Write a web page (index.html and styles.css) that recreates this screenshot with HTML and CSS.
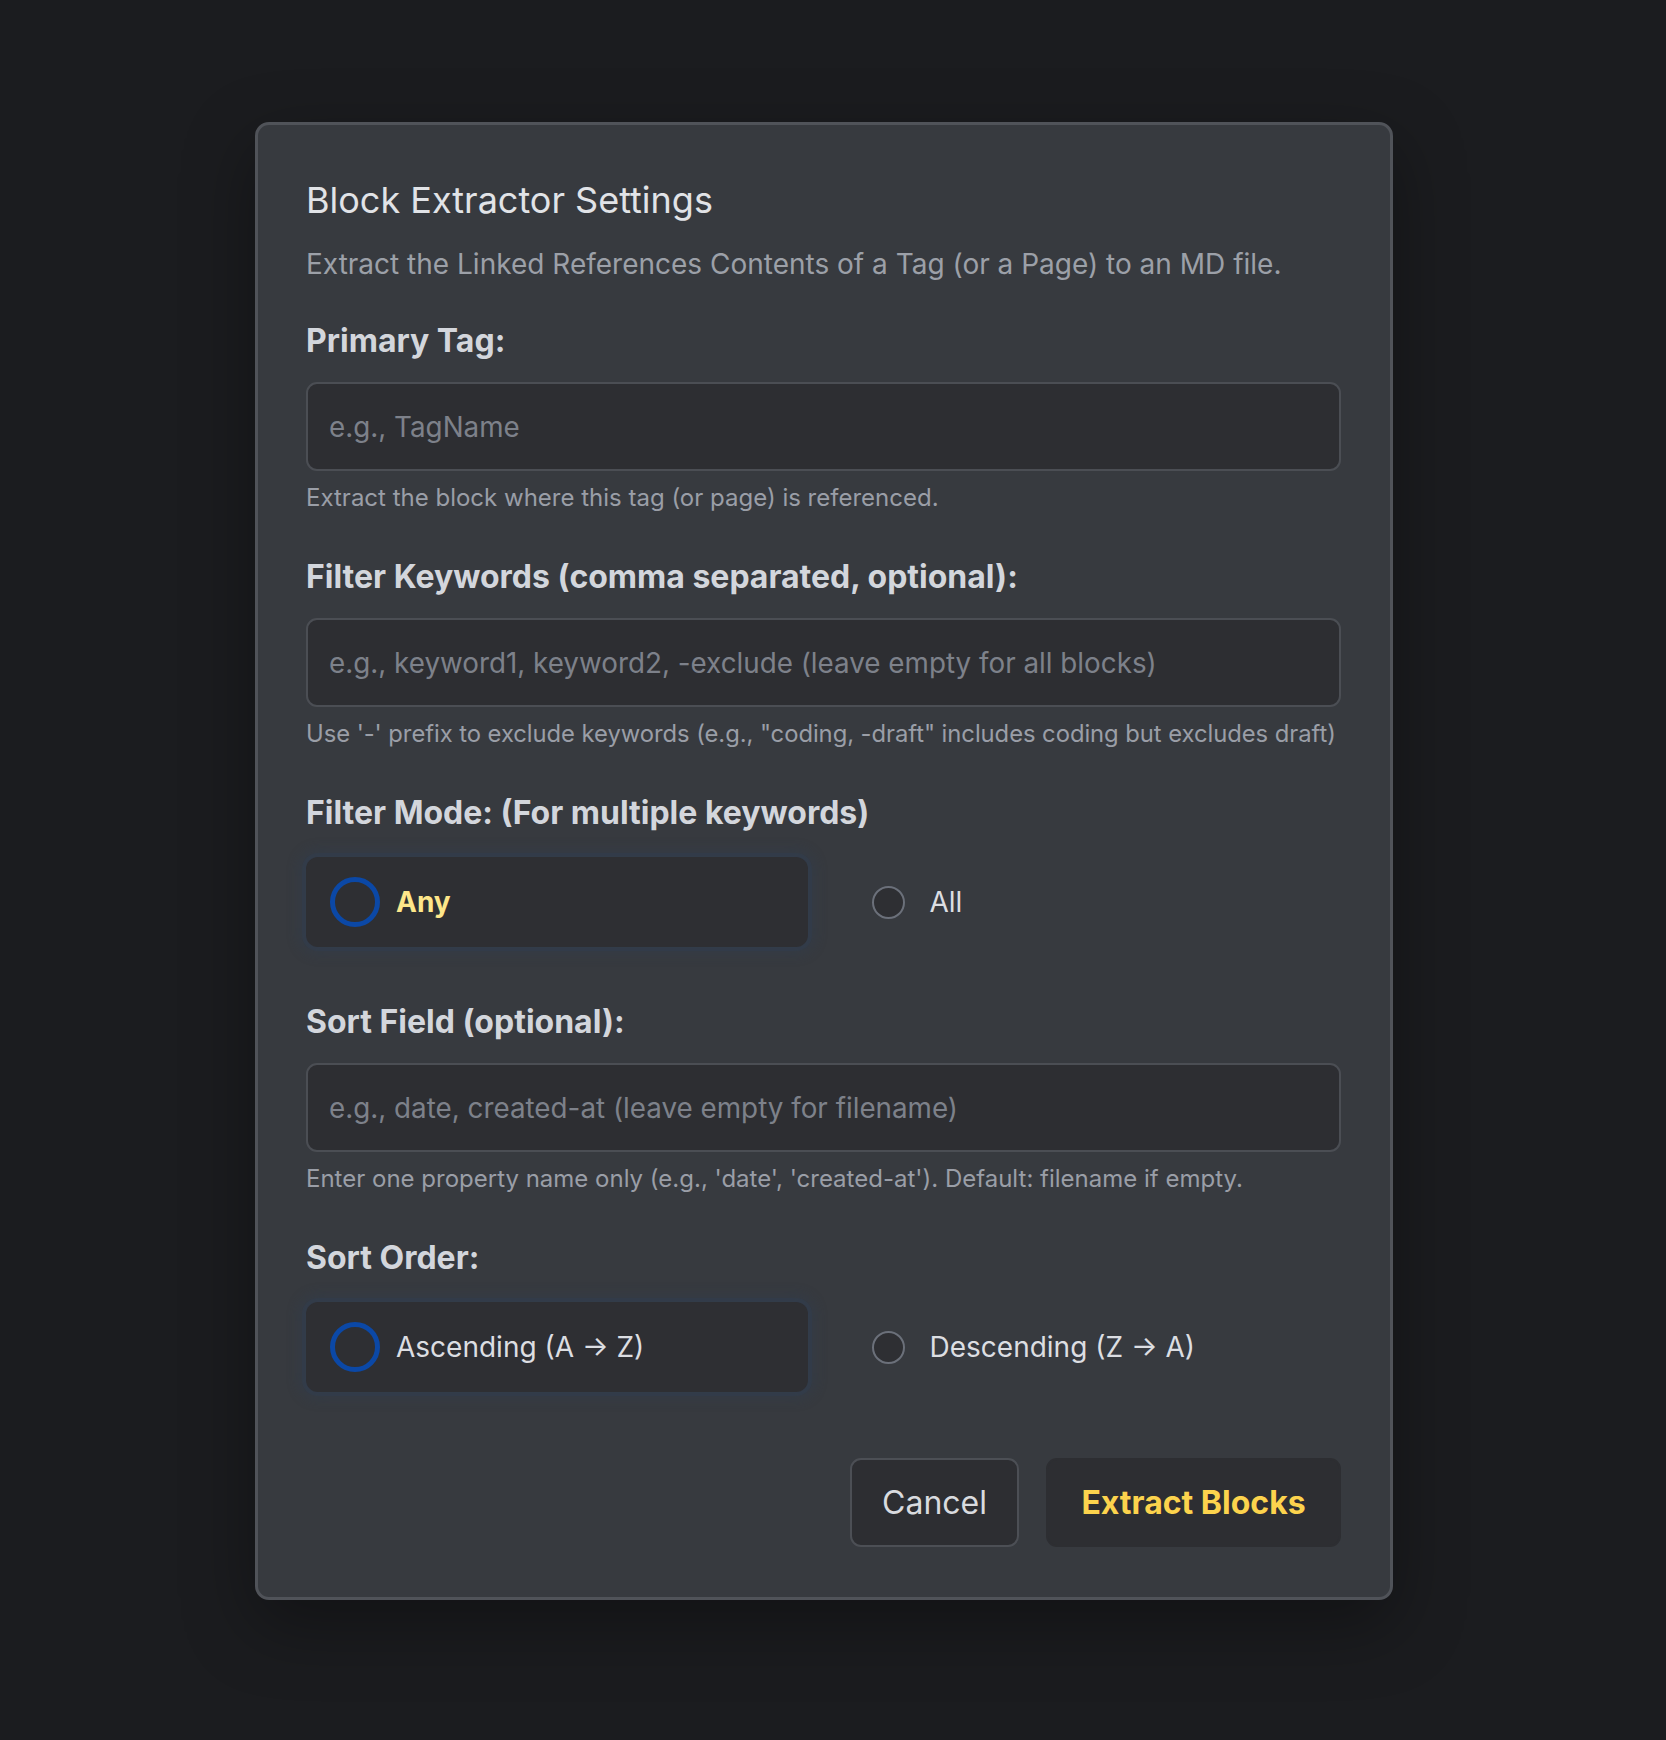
FILE: index.html
```html
<!DOCTYPE html>
<html lang="en">
<head>
<meta charset="utf-8">
<title>Block Extractor Settings</title>
<link rel="stylesheet" href="styles.css">
</head>
<body>
<div class="dialog">
  <h1 class="title">Block Extractor Settings</h1>
  <p class="desc">Extract the Linked References Contents of a Tag (or a Page) to an MD file.</p>

  <div class="field first">
    <label class="label">Primary Tag:</label>
    <div class="input"><span class="ph">e.g., TagName</span></div>
    <p class="help">Extract the block where this tag (or page) is referenced.</p>
  </div>

  <div class="field">
    <label class="label">Filter Keywords (comma separated, optional):</label>
    <div class="input"><span class="ph">e.g., keyword1, keyword2, -exclude (leave empty for all blocks)</span></div>
    <p class="help tight">Use '-' prefix to exclude keywords (e.g., "coding, -draft" includes coding but excludes draft)</p>
  </div>

  <div class="field choice">
    <label class="label">Filter Mode: (For multiple keywords)</label>
    <div class="options">
      <div class="option selected"><span class="radio"><span class="ring"></span></span><span class="opt-text bold">Any</span></div>
      <div class="option"><span class="radio"><span class="dot"></span></span><span class="opt-text">All</span></div>
    </div>
  </div>

  <div class="field">
    <label class="label">Sort Field (optional):</label>
    <div class="input"><span class="ph">e.g., date, created-at (leave empty for filename)</span></div>
    <p class="help">Enter one property name only (e.g., 'date', 'created-at'). Default: filename if empty.</p>
  </div>

  <div class="field choice">
    <label class="label">Sort Order:</label>
    <div class="options">
      <div class="option selected"><span class="radio"><span class="ring"></span></span><span class="opt-text">Ascending (A → Z)</span></div>
      <div class="option"><span class="radio"><span class="dot"></span></span><span class="opt-text">Descending (Z → A)</span></div>
    </div>
  </div>

  <div class="actions">
    <button class="btn cancel">Cancel</button>
    <button class="btn primary">Extract Blocks</button>
  </div>
</div>
</body>
</html>
```

FILE: styles.css
```css
* { box-sizing: border-box; }
html, body { margin: 0; padding: 0; }
body {
  background: #1b1c1f;
  font-family: Inter, "Noto Sans", sans-serif;
  min-height: 1740px;
}
.dialog {
  width: 1138px;
  margin: 122px 0 0 255px;
  background: #373a3f;
  border: 3px solid #505359;
  border-radius: 14px;
  padding: 53px 49px 50px 48px;
  box-shadow: 0 24px 70px rgba(0,0,0,0.35);
}
.title {
  margin: 0;
  font-size: 36px;
  font-weight: 400;
  color: #e1e3e7;
  line-height: 44px;
}
.desc {
  margin: 24px 0 0;
  font-size: 28px;
  color: #9ca0a8;
  line-height: 36px;
}
.field { margin-top: 44px; }
.field.first { margin-top: 39px; }
.field.choice + .field { margin-top: 55px; }
.label {
  display: block;
  font-size: 32px;
  font-weight: 700;
  color: #d3d6dc;
  line-height: 40px;
}
.input {
  margin-top: 21px;
  height: 89px;
  background: #2d2e32;
  border: 2px solid #4b4e54;
  border-radius: 11px;
  display: flex;
  align-items: center;
  padding: 0 21px;
}
.ph { font-size: 27.8px; color: #7d818a; }
.help {
  margin: 12px 0 0;
  font-size: 24px;
  color: #9a9ea7;
  line-height: 30px;
  white-space: nowrap;
}
.help.tight { font-size: 23.8px; letter-spacing: -0.05px; }
.options {
  margin-top: 24px;
  display: grid;
  grid-template-columns: 1fr 1fr;
  column-gap: 32px;
}
.option {
  height: 90px;
  display: flex;
  align-items: center;
  gap: 16px;
  padding: 0 24px;
  border-radius: 12px;
}
.option.selected {
  background: #2e2f33;
  box-shadow: 0 0 0 4px rgba(48,62,84,0.35), 0 0 12px 8px rgba(48,62,84,0.32);
}
.radio {
  width: 50px; height: 50px;
  display: flex; align-items: center; justify-content: center;
  flex: none;
}
.ring {
  width: 50px; height: 50px;
  border-radius: 50%;
  border: 5px solid #0b48a6;
}
.dot {
  width: 33px; height: 33px;
  border-radius: 50%;
  border: 2px solid #6b707a;
  background: #2e2f33;
}
.opt-text { font-size: 28px; color: #dcdee2; }
.opt-text.bold { font-weight: 700; color: #fde68a; }
.actions {
  margin-top: 66px;
  display: flex;
  justify-content: flex-end;
  gap: 27px;
}
.btn {
  height: 89px;
  border-radius: 11px;
  font-family: Inter, "Noto Sans", sans-serif;
  font-size: 32px;
  padding: 0 20px;
  background: #2d2e32;
}
.cancel {
  width: 169px;
  border: 2px solid #4c4f55;
  color: #d9dbdf;
}
.primary {
  width: 295px;
  border: 2px solid #2d2e32;
  color: #fcd34d;
  font-weight: 700;
}
```
